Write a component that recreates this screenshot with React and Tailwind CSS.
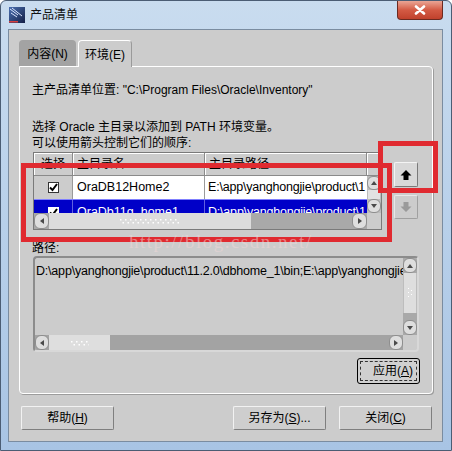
import React from "react"

const ArrowTri = ({ dir, color = "#4a4a4a" }) => {
    const pts = {
        up: "1,6 4,2 7,6",
        down: "1,2 4,6 7,2",
        left: "6,1 2,4 6,7",
        right: "2,1 6,4 2,7",
    }
    return (
        <svg width="8" height="8" viewBox="0 0 8 8">
            <polygon points={pts[dir]} fill={color} />
        </svg>
    )
}

const ScrollBtn = ({ dir, className = "" }) => (
    <div className={`flex items-center justify-center bg-[#dedede] border border-[#8e8e8e] rounded-[6px] shrink-0 ${className}`}>
        <ArrowTri dir={dir} />
    </div>
)

const Grip = ({ vertical }) => (
    <svg width={vertical ? 6 : 60} height={vertical ? 10 : 6} viewBox={vertical ? "0 0 6 10" : "0 0 60 6"}>
        {vertical
            ? [[1, 1], [4, 3], [1, 5], [4, 7], [1, 9]].map(([x, y], i) => <rect key={i} x={x} y={y - 1} width="1" height="1" fill="#ffffff" />)
            : Array.from({ length: 12 }).map((_, i) => (
                <g key={i}>
                    <rect x={i * 5} y="1" width="1.5" height="1.5" fill="#ffffff" />
                    <rect x={i * 5 + 2.5} y="4" width="1.5" height="1.5" fill="#ffffff" />
                </g>
            ))}
    </svg>
)

const Check = ({ selected }) => (
    <div className={`w-[11px] h-[11px] flex items-center justify-center border ${selected ? "bg-white border-white" : "bg-white border-[#333333]"}`}>
        <svg width="9" height="9" viewBox="0 0 9 9">
            <path d="M1 4.5 L3.5 7 L8 1" stroke="#000000" strokeWidth="2" fill="none" />
        </svg>
    </div>
)

const BigArrow = ({ dir, color }) => (
    <svg width="12" height="12" viewBox="0 0 12 12">
        {dir === "up"
            ? <path d="M6 1 L11.5 6.5 H8.5 V11 H3.5 V6.5 H0.5 Z" fill={color} />
            : <path d="M6 11 L11.5 5.5 H8.5 V1 H3.5 V5.5 H0.5 Z" fill={color} />}
    </svg>
)

const Button = ({ children, className = "" }) => (
    <div className={`flex items-center justify-center h-[24px] bg-[#cecece] border border-t-[#f2f2f2] border-l-[#f2f2f2] border-r-[#7f7f7f] border-b-[#7f7f7f] rounded-[2px] text-[12px] text-black ${className}`}>
        {children}
    </div>
)

const OraIcon = () => (
    <svg width="16" height="16" viewBox="0 0 16 16">
        <defs>
            <linearGradient id="oi" x1="0" y1="0" x2="1" y2="1">
                <stop offset="0" stopColor="#4a6fb0" />
                <stop offset="1" stopColor="#142047" />
            </linearGradient>
        </defs>
        <rect x="0" y="0" width="16" height="16" fill="url(#oi)" />
        <path d="M1 2 L9 8 M3 1 L13 9 M2 6 L8 10" stroke="#dbe6ff" strokeWidth="1" />
        <rect x="0" y="14" width="9" height="1.5" fill="#d84040" />
    </svg>
)

export default function App() {
    return (
        <div className="relative w-[452px] h-[451px] overflow-hidden bg-gradient-to-b from-[#c9dcef] via-[#b8d0ea] to-[#a8c4e4] border border-[#4b5d74] rounded-t-[6px] font-['Liberation_Sans','Noto_Sans_CJK_SC',sans-serif] text-black">
            {/* title bar */}
            <div className="flex h-[28px]">
                <div className="ml-[8px] mt-[6px]"><OraIcon /></div>
                <div className="ml-[5px] mt-[5px] text-[12px] leading-[18px] text-[#111111]">产品清单</div>
                <div className="ml-auto mr-[8px] mt-0 w-[46px] h-[19px] flex items-center justify-center rounded-b-[4px] border border-t-0 border-[#6b2a20] bg-gradient-to-b from-[#e9a595] via-[#d35a44] to-[#c0412c]">
                    <svg width="12" height="10" viewBox="0 0 12 10">
                        <path d="M2 1.5 L10 8.5 M10 1.5 L2 8.5" stroke="#ffffff" strokeWidth="2.6" strokeLinecap="round" />
                    </svg>
                </div>
            </div>

            {/* client area */}
            <div className="ml-[7px] w-[435px] h-[413px] bg-[#cccccc] border border-[#7a8ca0] flex flex-col">
                {/* tabs */}
                <div className="flex ml-[10px] mt-[10px] h-[26px] relative z-10">
                    <div className="w-[57px] h-[26px] bg-[#a3a3a3] rounded-t-[4px] flex items-center justify-center text-[12px] pt-[2px]">内容(N)</div>
                    <div className="ml-[2px] w-[54px] h-[27px] bg-[#cccccc] rounded-t-[4px] border border-b-0 border-t-white border-l-white border-r-[#9a9a9a] flex items-center justify-center text-[12px] pt-[2px]">环境(E)</div>
                </div>
                <div className="ml-[10px] w-[414px] h-[328px] border border-white rounded-[4px] rounded-tl-none shadow-[1px_1px_0_#9c9c9c] flex flex-col">
                    <div className="ml-[12px] w-[388px] flex flex-col">
                        <div className="mt-[15px] h-[16px] leading-[16px] text-[12px] whitespace-nowrap">主产品清单位置: "C:\Program Files\Oracle\Inventory"</div>
                        <div className="mt-[21px] h-[16px] leading-[16px] text-[12px] whitespace-nowrap">选择 Oracle 主目录以添加到 PATH 环境变量。</div>
                        <div className="h-[16px] leading-[16px] text-[12px] whitespace-nowrap">可以使用箭头控制它们的顺序:</div>

                        {/* table + arrows */}
                        <div className="flex mt-[1px]">
                            <div className="ml-[1px] w-[349px] h-[78px] border border-[#7a7a7a] flex flex-col text-[12px] overflow-hidden">
                                <div className="flex h-[23px] border-b border-[#8a8a8a]">
                                    <div className="w-[39px] border-r border-[#8a8a8a] shadow-[inset_1px_1px_0_#ffffff] flex items-center justify-center">选择</div>
                                    <div className="w-[132px] border-r border-[#8a8a8a] shadow-[inset_1px_1px_0_#ffffff] flex items-center pl-[4px]">主目录名</div>
                                    <div className="w-[162px] border-r border-[#8a8a8a] shadow-[inset_1px_1px_0_#ffffff] flex items-center pl-[4px]">主目录路径</div>
                                    <div className="flex-1 shadow-[inset_1px_1px_0_#ffffff]"></div>
                                </div>
                                <div className="flex h-[37px]">
                                    <div className="w-[333px] flex flex-col overflow-hidden">
                                        <div className="flex h-[24px] shrink-0 border-b border-[#8080ff]">
                                            <div className="w-[39px] border-r border-[#9a9a9a] flex items-center justify-center"><Check /></div>
                                            <div className="w-[132px] bg-white border-r border-[#9a9a9a] flex items-center pl-[4px] text-[12.5px]">OraDB12Home2</div>
                                            <div className="w-[162px] bg-white flex items-center pl-[3px] text-[12.5px] tracking-[-0.2px] whitespace-nowrap overflow-hidden">E:\app\yanghongjie\product\1</div>
                                        </div>
                                        <div className="flex h-[24px] shrink-0 bg-[#0000c8] text-white">
                                            <div className="w-[39px] border-r border-[#6060e0] flex items-center justify-center"><Check selected /></div>
                                            <div className="w-[132px] border-r border-[#6060e0] flex items-center pl-[4px] text-[12.5px]">OraDb11g_home1</div>
                                            <div className="w-[162px] flex items-center pl-[3px] text-[12.5px] tracking-[-0.2px] whitespace-nowrap overflow-hidden">D:\app\yanghongjie\product\1</div>
                                        </div>
                                    </div>
                                    <div className="w-[14px] flex flex-col bg-[#bcbcbc]">
                                        <ScrollBtn dir="up" className="h-[14px] w-[14px]" />
                                        <div className="flex-1 bg-[#e2e2e2] mx-[1px] flex items-center justify-center"></div>
                                        <ScrollBtn dir="down" className="h-[14px] w-[14px]" />
                                    </div>
                                </div>
                                <div className="flex h-[16px]">
                                    <div className="w-[333px] flex bg-[#a9a9a9]">
                                        <ScrollBtn dir="left" className="w-[15px] h-[16px]" />
                                        <div className="w-[202px] bg-[#dcdcdc] flex items-center justify-center"><Grip /></div>
                                        <div className="flex-1"></div>
                                        <ScrollBtn dir="right" className="w-[15px] h-[16px]" />
                                    </div>
                                    <div className="flex-1 bg-[#cccccc]"></div>
                                </div>
                            </div>
                            <div className="ml-[12px] flex flex-col">
                                <div className="mt-[10px] w-[24px] h-[25px] bg-[#d8d8d8] border border-t-[#f4f4f4] border-l-[#f4f4f4] border-r-[#7a7a7a] border-b-[#7a7a7a] rounded-[2px] flex items-center justify-center">
                                    <BigArrow dir="up" color="#000000" />
                                </div>
                                <div className="mt-[8px] w-[24px] h-[24px] bg-[#cccccc] border border-t-[#e8e8e8] border-l-[#e8e8e8] border-r-[#a0a0a0] border-b-[#a0a0a0] rounded-[2px] flex items-center justify-center">
                                    <BigArrow dir="down" color="#9a9a9a" />
                                </div>
                            </div>
                        </div>

                        <div className="mt-[11px] h-[15px] leading-[15px] text-[12px]">路径:</div>

                        {/* path text area */}
                        <div className="ml-[1px] w-[386px] h-[96px] border-2 border-[#8c8c8c] border-r-[#d8d8d8] border-b-[#d8d8d8] rounded-[4px] flex flex-col overflow-hidden">
                            <div className="flex flex-1">
                                <div className="flex-1 overflow-hidden whitespace-nowrap text-[12.5px] tracking-[-0.2px] leading-[16px] pl-[1px] pt-[5px]">D:\app\yanghongjie\product\11.2.0\dbhome_1\bin;E:\app\yanghongjie</div>
                                <div className="w-[14px] flex flex-col bg-[#a9a9a9]">
                                    <ScrollBtn dir="up" className="w-[14px] h-[15px]" />
                                    <div className="h-[40px] bg-[#dedede] border-x border-[#bdbdbd] flex items-center justify-center"><Grip vertical /></div>
                                    <div className="flex-1"></div>
                                    <ScrollBtn dir="down" className="w-[14px] h-[15px]" />
                                </div>
                            </div>
                            <div className="flex h-[15px]">
                                <div className="flex flex-1 bg-[#a3a3a3]">
                                    <ScrollBtn dir="left" className="w-[14px] h-[15px]" />
                                    <div className="w-[61px] bg-[#dedede] flex items-center justify-center overflow-hidden"><div className="w-[18px] overflow-hidden"><Grip /></div></div>
                                    <div className="flex-1"></div>
                                    <ScrollBtn dir="right" className="w-[14px] h-[15px]" />
                                </div>
                                <div className="w-[14px] bg-[#cccccc]"></div>
                            </div>
                        </div>

                        <div className="flex justify-end mt-[6px]">
                            <div className="w-[63px] h-[26px] bg-[#d0d0d0] border border-black rounded-[3px] p-[2px]">
                                <div className="w-full h-full border border-dashed border-[#333333] flex items-center justify-end pr-[3px] text-[12px]">
                                    应用(<span className="underline">A</span>)
                                </div>
                            </div>
                        </div>
                    </div>
                </div>

                {/* bottom buttons */}
                <div className="flex mt-[12px] ml-[12px]">
                    <Button className="w-[93px]">帮助(<span className="underline">H</span>)</Button>
                    <Button className="w-[93px] ml-[119px]">另存为(<span className="underline">S</span>)...</Button>
                    <Button className="w-[93px] ml-[13px]">关闭(<span className="underline">C</span>)</Button>
                </div>
            </div>

            {/* annotations drawn over the screenshot */}
            <div className="absolute left-[20px] top-[162px] w-[371px] h-[79px] border-[5px] border-[#e02a30]"></div>
            <div className="absolute left-[377px] top-[140px] w-[60px] h-[52px] border-[5px] border-[#e02a30]"></div>
            <div className="absolute left-[128px] top-[227px] text-[19px] tracking-[1.5px] font-['Liberation_Serif',serif] text-[#f0d8d8] opacity-50 whitespace-nowrap">http://blog.csdn.net/</div>
        </div>
    )
}
